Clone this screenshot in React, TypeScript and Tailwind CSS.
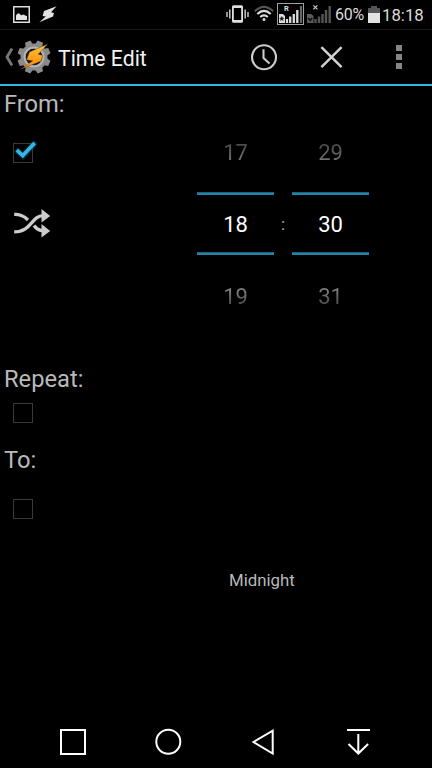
import React from 'react';

function StatusBar() {
  return (
    <header className="flex h-[29px] items-start bg-black text-[#dcdcdc]">
      <svg className="ml-[13px] mt-[6px] h-[17px] w-[17px] shrink-0" viewBox="0 0 17 17">
        <rect x="0.75" y="0.75" width="15.5" height="15.5" fill="none" stroke="#dedede" strokeWidth="1.5" />
        <path d="M3 14V9.5L4 8l2-.8 2 2 3-.8 1 1.2 2 .4v4z" fill="#e2e2e2" />
      </svg>
      <svg className="ml-[9px] mt-[6px] h-[17px] w-[19px] shrink-0" viewBox="0 0 19 17">
        <path d="M17.6.3 5 5 3.6 9.9 6.8 10.6 .3 16.3 14 10.4 15 7 12 6.2z" fill="#e2e2e2" />
      </svg>
      <svg className="ml-[168px] mt-[5px] h-[19px] w-[24px] shrink-0" viewBox="0 0 24 19">
        <rect x="6.9" y="1.1" width="9.2" height="15.8" rx="0.6" fill="none" stroke="#e0e0e0" strokeWidth="1.8" />
        <path d="M7 2h9M7 16h9" stroke="#e0e0e0" strokeWidth="2.2" />
        <path d="M3.8 4.5v9M19.2 4.5v9M1 7v5M22 7v5" stroke="#b8b8b8" strokeWidth="1.6" />
      </svg>
      <svg className="ml-[4px] mt-[5px] h-[17px] w-[20px] shrink-0" viewBox="0 0 20 17" fill="none" strokeWidth="2.1">
        <path d="M.8 6.2Q10-2.6 19.2 6.2" stroke="#555" />
        <path d="M3.3 9Q10 2.7 16.7 9" stroke="#ddd" />
        <path d="M6.2 12Q10 8.6 13.8 12" stroke="#ddd" />
        <circle cx="10" cy="14.6" r="1.5" fill="#ddd" />
      </svg>
      <div className="relative ml-[3px] mt-[3px] h-[22px] w-[27px] shrink-0">
        <svg className="h-[22px] w-[27px]" viewBox="0 0 27 22">
          <rect x="0.5" y="0.5" width="26" height="21" fill="none" stroke="#a0a0a0" />
          <path d="M2 11h4l2 2v7H2z" fill="#ddd" />
          <path d="M4.8 13l.8 1.6 1.7.3-1.2 1.2.3 1.8-1.6-.9-1.6.9.3-1.8-1.2-1.2 1.7-.3z" fill="#222" />
          <path d="M10 20v-4M13.2 20v-6.5M16.8 20V11M20.3 20V7" stroke="#ddd" strokeWidth="2.3" />
          <path d="M24 20V3" stroke="#666" strokeWidth="2.2" />
        </svg>
        <span className="absolute left-[7px] top-[2px] text-[7.5px] font-bold leading-[8px]">R</span>
      </div>
      <svg className="ml-[2px] mt-[3px] h-[22px] w-[26px] shrink-0" viewBox="0 0 26 22">
        <path d="M1 11h4l2.5 2v7H1z" fill="#5c5c5c" />
        <path d="M2.2 15l2 2.5 2-2.5" stroke="#111" strokeWidth="1.6" fill="none" />
        <path d="M9.5 20v-4M13 20v-6.5M16.5 20V11M20 20V7M23.7 20V3" stroke="#555" strokeWidth="2.4" />
        <path d="M7.4 2.3l4 4M11.4 2.3l-4 4" stroke="#ccc" strokeWidth="1.2" />
      </svg>
      <span className="ml-[3px] mt-[5px] w-[30px] shrink-0 whitespace-nowrap text-[16px] leading-[20px] tracking-[-0.3px]">60%</span>
      <svg className="ml-[3px] mt-[5px] h-[18px] w-[12px] shrink-0" viewBox="0 0 12 18">
        <path d="M0 3h3V1h6v2h3v5H0z" fill="#555" />
        <path d="M0 8h12v10H0z" fill="#e2e2e2" />
      </svg>
      <span className="ml-[2px] mt-[5px] shrink-0 whitespace-nowrap text-[16.8px] leading-[20px]">18:18</span>
    </header>
  );
}

const teeth = [22.5, 67.5, 112.5, 157.5, 202.5, 247.5, 292.5, 337.5];

function AppLogo() {
  return (
    <svg className="h-[36px] w-[34px] shrink-0" viewBox="-17 -18 34 36">
      <defs>
        <linearGradient id="bolt" x1="0" y1="0" x2="0" y2="1">
          <stop offset="0" stopColor="#ffc43c" />
          <stop offset="1" stopColor="#ff8400" />
        </linearGradient>
      </defs>
      {teeth.map((angle) => (
        <path key={angle} d="M-4-11-2.9-16.6H2.9L4-11z" fill="#8b8b8b" transform={`rotate(${angle})`} />
      ))}
      <circle r="11" fill="#171717" stroke="#8b8b8b" strokeWidth="5" />
      <circle r="9.5" fill="none" stroke="#b5b5b5" strokeWidth="2" />
      <path d="M13.5-12.8-4.5-5-7.4 2.8-1.2 3.7-13.2 12.2 7.2 4 8.6-1.6 4.2-2.8z" fill="url(#bolt)" stroke="#5e4420" strokeWidth=".4" />
    </svg>
  );
}

function ActionBar() {
  return (
    <div className="flex h-[57px] items-center border-b-2 border-t border-b-[#33b5e5] border-t-[#191919]">
      <svg className="ml-[5px] h-[18px] w-[9px] shrink-0" viewBox="0 0 9 18">
        <path d="M7 .6 2 9l5 8.4" fill="none" stroke="#777" strokeWidth="2.8" />
      </svg>
      <div className="ml-[3px] flex w-[34px] shrink-0"><AppLogo /></div>
      <h1 className="ml-[7px] w-[192px] whitespace-nowrap pt-[3px] text-[21.2px] leading-[26px] text-[#f2f2f2]">Time Edit</h1>
      <svg className="h-[28px] w-[28px] shrink-0" viewBox="0 0 28 28" fill="none" stroke="#ccc" strokeWidth="2.1">
        <circle cx="14" cy="14.2" r="12" />
        <path d="M13.5 6.2v8.8l6 5.6" />
      </svg>
      <svg className="ml-[42px] h-[24px] w-[24px] shrink-0" viewBox="0 0 24 24" fill="none" stroke="#d2d2d2" strokeWidth="2.4">
        <path d="M1.4 2.2 21.6 22.2M21.6 2.2 1.4 22.2" />
      </svg>
      <div className="ml-[52px] flex flex-col gap-[3px]">
        <i className="h-[6px] w-[6px] bg-[#858585]" />
        <i className="h-[6px] w-[6px] bg-[#858585]" />
        <i className="h-[6px] w-[6px] bg-[#858585]" />
      </div>
    </div>
  );
}

function CheckBox({ checked = false }: { checked?: boolean }) {
  return (
    <svg className="block h-[24px] w-[28px]" viewBox="0 0 28 24">
      <rect x="0.5" y="3.5" width="19" height="19" fill="none" stroke="#3a3a3a" />
      {checked && (
        <>
          <path d="M5 11.5 9.8 16 20.8 4.2" fill="none" stroke="#126589" strokeWidth="6.5" opacity=".35" strokeLinecap="round" />
          <path d="M5.2 11.3 9.8 15.6 20.4 4.4" fill="none" stroke="#33b5e5" strokeWidth="3.8" strokeLinecap="square" />
        </>
      )}
    </svg>
  );
}

function Divider() {
  return (
    <div className="w-full">
      <div className="h-px bg-[#1b6380]" />
      <div className="h-[2px] bg-[#2482a8]" />
    </div>
  );
}

function Wheel({ values }: { values: string[] }) {
  return (
    <div className="flex w-[77px] flex-col text-center text-[22px] leading-[26px]">
      <span className="h-[52px] bg-linear-to-b from-[#4c4c4c] from-10% to-[#808080] to-50% bg-clip-text text-transparent">{values[0]}</span>
      <Divider />
      <div className="flex h-[57px] items-center justify-center pt-[3px] text-white">{values[1]}</div>
      <Divider />
      <span className="mt-[29px] h-[26px] bg-linear-to-b from-[#808080] from-20% to-[#444] to-90% bg-clip-text text-transparent">{values[2]}</span>
    </div>
  );
}

function NavBar() {
  return (
    <nav className="mt-auto flex h-[51px] items-start pl-[59px] pt-[11px]">
      <svg className="h-[28px] w-[28px]" viewBox="0 0 28 28" fill="none" stroke="#fff" strokeWidth="2">
        <rect x="2" y="2" width="24" height="24" />
      </svg>
      <svg className="ml-[67px] h-[28px] w-[28px]" viewBox="0 0 28 28" fill="none" stroke="#fff" strokeWidth="2">
        <circle cx="14.3" cy="13.8" r="12" />
      </svg>
      <svg className="ml-[68px] h-[28px] w-[28px]" viewBox="0 0 28 28" fill="none" stroke="#fff" strokeWidth="2">
        <path d="M3.5 14 22.7 2.7v22.8z" />
      </svg>
      <svg className="ml-[66px] h-[28px] w-[28px]" viewBox="0 0 28 28" fill="none" stroke="#fff" strokeWidth="2">
        <path d="M3 2h23M14.3 6v19M4.5 16l9.8 9.5 9.8-9.5" />
      </svg>
    </nav>
  );
}

export default function App() {
  return (
    <div className="flex h-[768px] w-[432px] flex-col overflow-hidden bg-black font-['Roboto',sans-serif]">
      <StatusBar />
      <ActionBar />
      <main className="text-[#b9b9b9]">
        <h2 className="mt-[4px] h-[28px] pl-[4px] text-[23.7px] leading-[28px]">From:</h2>
        <div className="mt-[22px] flex h-[170px]">
          <div className="w-[197px] pl-[13px]">
            <CheckBox checked />
            <svg className="ml-[1px] mt-[45px] h-[29px] w-[37px]" viewBox="0 0 37 29" fill="none" stroke="#ccc" strokeWidth="3.3">
              <path d="M.2 5.4C9 5.2 12 9 14 11" />
              <path d="M.2 22.8C18 22.8 17 7 29 6.7" />
              <path d="M20 16.5c2 3 5 5 9 5" />
              <path d="M27.5 0 36.2 6.9 27.5 13.5zM27.5 15 36.2 21.9 27.5 28.5z" fill="#ccc" stroke="none" />
            </svg>
          </div>
          <Wheel values={['17', '18', '19']} />
          <span className="w-[18px] pt-[74px] text-center text-[17px] leading-[20px]">:</span>
          <Wheel values={['29', '30', '31']} />
        </div>
        <h2 className="mt-[55px] h-[28px] pl-[4px] text-[23.7px] leading-[28px]">Repeat:</h2>
        <div className="mt-[7px] pl-[13px]"><CheckBox /></div>
        <h2 className="mt-[22px] h-[28px] pl-[4px] text-[23.7px] leading-[28px]">To:</h2>
        <div className="mt-[22px] pl-[13px]"><CheckBox /></div>
        <p className="mt-[50px] pl-[229px] text-[16.8px] leading-[20px]">Midnight</p>
      </main>
      <NavBar />
    </div>
  );
}
